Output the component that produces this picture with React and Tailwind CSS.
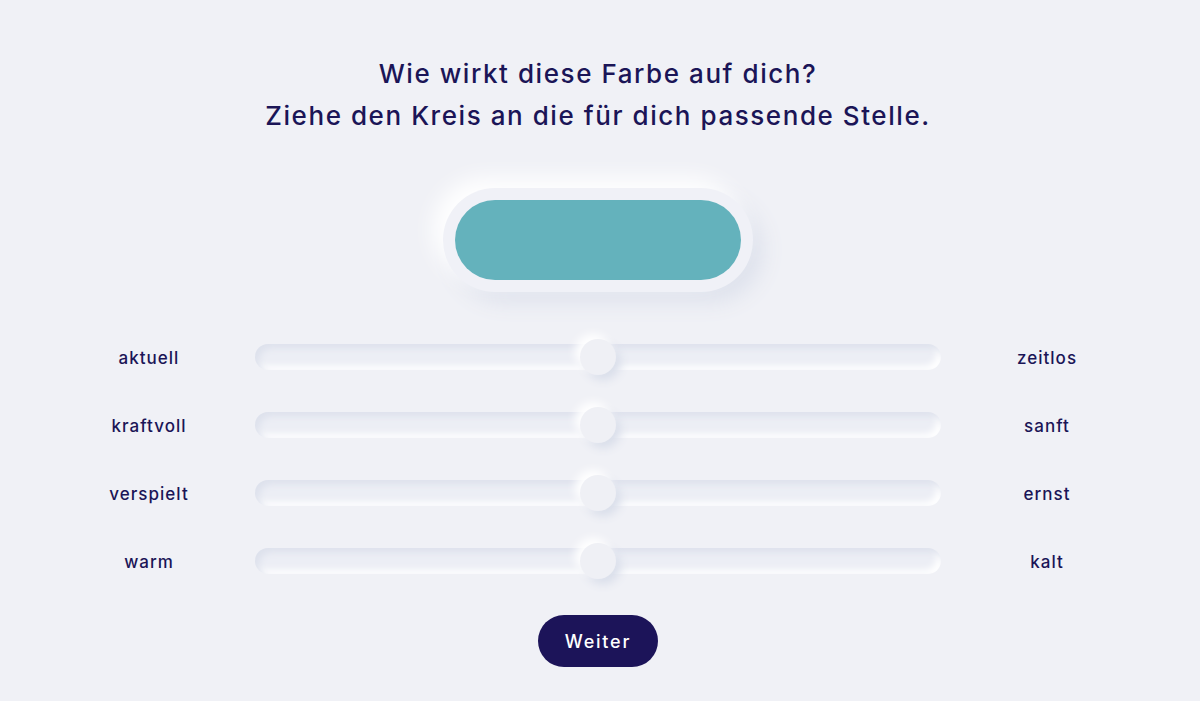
import React from "react";

const rows = [
  ["aktuell", "zeitlos"],
  ["kraftvoll", "sanft"],
  ["verspielt", "ernst"],
  ["warm", "kalt"],
];

export default function App() {
  return (
    <div
      className="w-[1200px] h-[701px] bg-[#f0f1f6] flex flex-col items-center overflow-hidden text-[#1b1557] pr-[4px]"
      style={{ fontFamily: "Inter, 'Open Sans', sans-serif" }}
    >
      <div className="pt-[53px] text-center text-[26px] font-medium leading-[42px] tracking-[0.06em]">
        <div>Wie wirkt diese Farbe auf dich?</div>
        <div>Ziehe den Kreis an die für dich passende Stelle.</div>
      </div>

      <div className="mt-[51px] w-[310px] h-[104px] rounded-full bg-[#f0f1f7] p-[12px] shadow-[-10px_-10px_22px_#ffffff,10px_10px_22px_#dde1ec]">
        <div className="w-full h-full rounded-full bg-[#64b2bc]" />
      </div>

      <div className="mt-[31px] w-full px-[54px] grid grid-cols-[190px_1fr_190px] gap-x-[11px]">
        {rows.map(([l, r]) => (
          <React.Fragment key={l}>
            <div className="h-[68px] flex items-center justify-center pt-[3px] text-[17px] font-medium tracking-[0.06em]">
              {l}
            </div>
            <div className="h-[68px] flex items-center">
              <div className="relative w-full h-[26px] rounded-full bg-[#eceef5] shadow-[inset_4px_4px_7px_#dde1ec,inset_-4px_-4px_7px_#ffffff]">
                <div className="absolute left-1/2 top-1/2 -translate-x-1/2 -translate-y-1/2 w-[36px] h-[36px] rounded-full bg-[#eff0f5] shadow-[-5px_-5px_10px_#ffffff,5px_5px_10px_#d9deea]" />
              </div>
            </div>
            <div className="h-[68px] flex items-center justify-center pt-[3px] text-[17px] font-medium tracking-[0.06em]">
              {r}
            </div>
          </React.Fragment>
        ))}
      </div>

      <button className="mt-[20px] w-[120px] h-[52px] rounded-full bg-[#1c1459] text-white text-[18px] font-medium tracking-[0.1em]">
        Weiter
      </button>
    </div>
  );
}
